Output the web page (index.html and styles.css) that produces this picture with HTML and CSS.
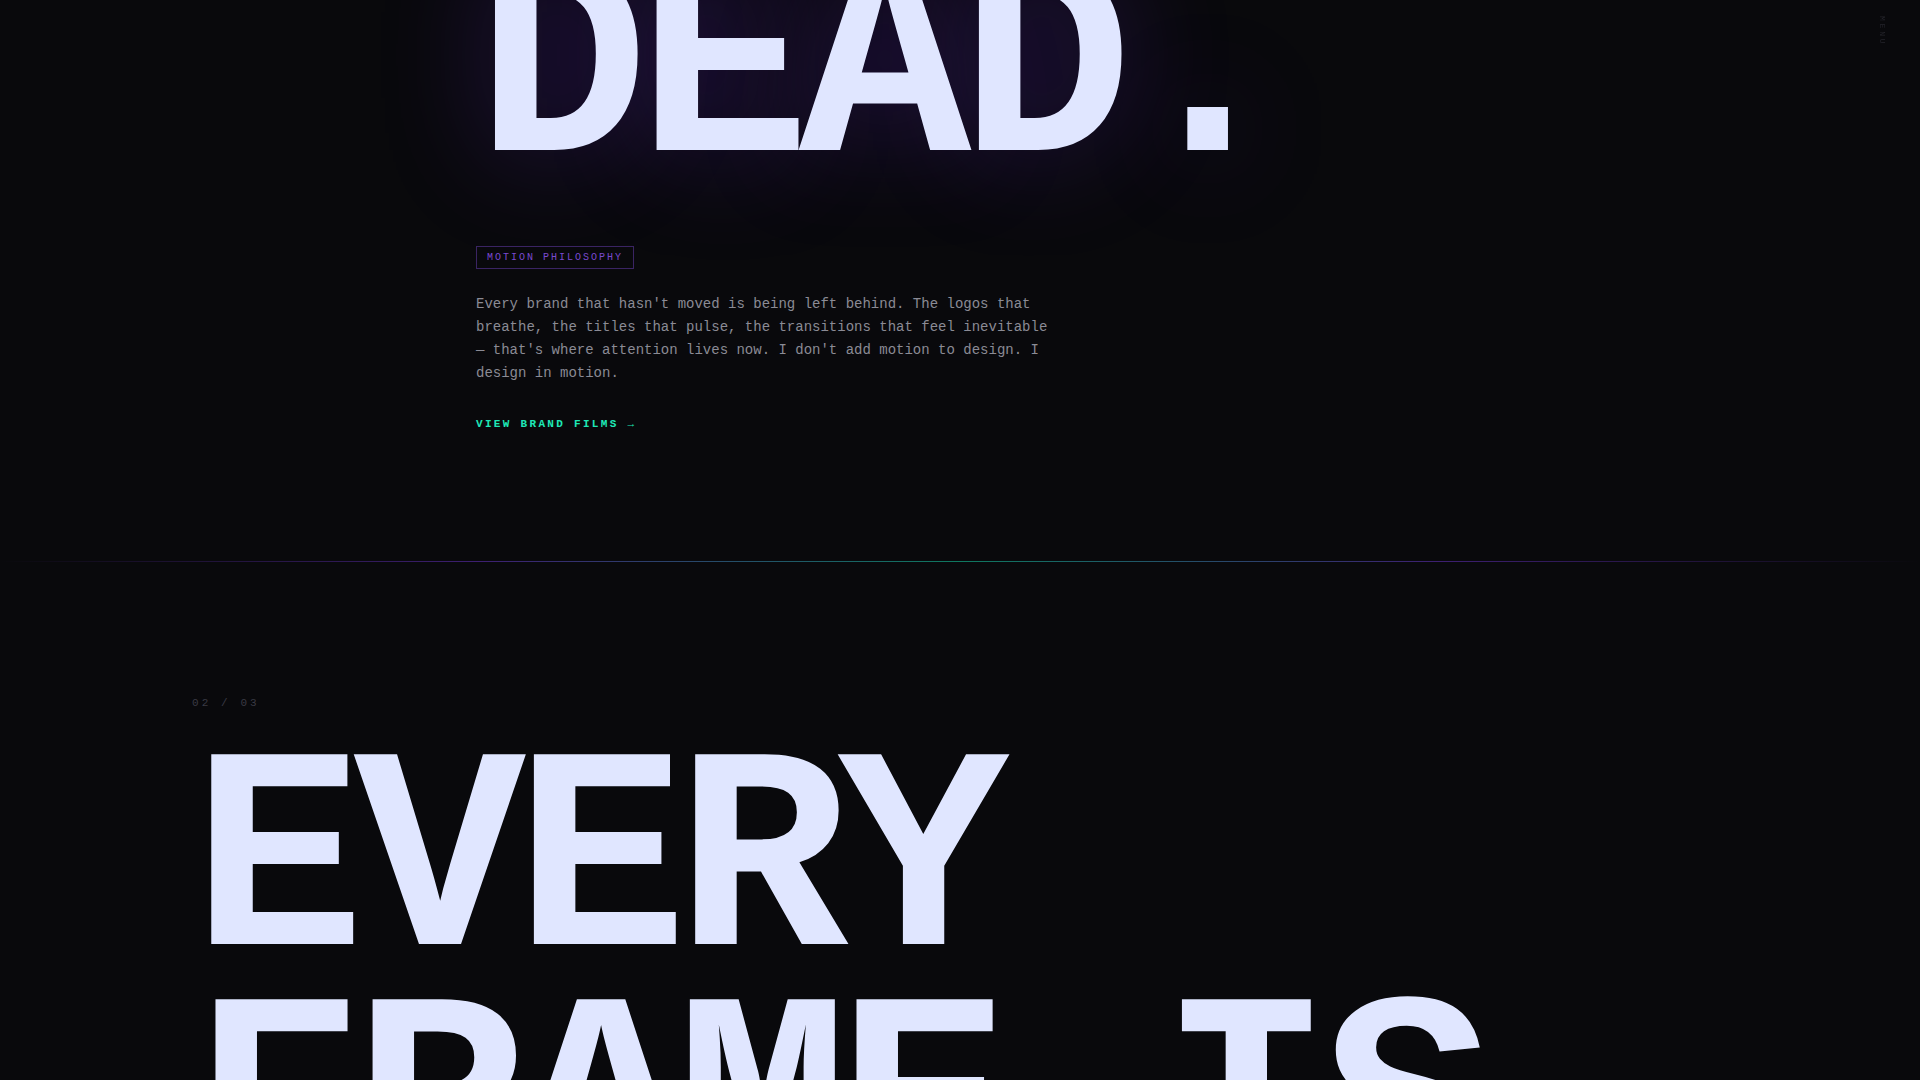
FILE: index.html
```html
<!DOCTYPE html>
<html lang="en">
<head>
<meta charset="utf-8">
<title>Motion Philosophy</title>
<link rel="stylesheet" href="styles.css">
</head>
<body>
<main class="page">
  <section class="chapter chapter-one">
    <div class="inner">
      <h1 class="mega glow">DEAD.</h1>
      <span class="tag">MOTION PHILOSOPHY</span>
      <p class="lede">Every brand that hasn't moved is being left behind. The logos that breathe, the titles that pulse, the transitions that feel inevitable — that's where attention lives now. I don't add motion to design. I design in motion.</p>
      <a class="cta" href="#">VIEW BRAND FILMS →</a>
    </div>
  </section>
  <div class="rule"></div>
  <section class="chapter chapter-two">
    <div class="count">02 / 03</div>
    <h2 class="mega">EVERY FRAME IS</h2>
  </section>
</main>
<div class="side">MENU</div>
</body>
</html>
```

FILE: styles.css
```css
html, body {
  margin: 0;
  padding: 0;
  background: #09090c;
}
body {
  font-family: "Liberation Mono", "Courier New", monospace;
  color: #8b8b95;
  height: 1080px;
  overflow: hidden;
}
.page {
  display: flex;
  flex-direction: column;
}
.chapter-one {
  padding-bottom: 131px;
}
.inner {
  width: 968px;
  margin: 0 auto;
  display: flex;
  flex-direction: column;
  align-items: flex-start;
}
.mega {
  font-family: "Liberation Mono", "Courier New", monospace;
  font-weight: 700;
  font-size: 288px;
  line-height: 0.85;
  letter-spacing: -0.04em;
  color: #e0e6ff;
  margin: 0;
}
.glow {
  margin-top: -49px;
  white-space: nowrap;
  text-shadow: 0 0 110px rgba(110, 50, 220, 0.3);
}
.tag {
  display: block;
  margin-top: 50px;
  font-size: 10px;
  line-height: normal;
  letter-spacing: 0.2em;
  padding: 5px 10px;
  color: #7a4ad0;
  border: 1px solid #3a2463;
}
.lede {
  margin: 24px 0 0;
  max-width: 580px;
  font-size: 14px;
  line-height: 1.65;
  color: #8b8b95;
}
.cta {
  display: block;
  margin-top: 33px;
  font-size: 11px;
  font-weight: 700;
  line-height: normal;
  letter-spacing: 0.21em;
  color: #1ee8b7;
  text-decoration: none;
}
.rule {
  height: 1px;
  background: linear-gradient(90deg, rgba(124, 58, 237, 0) 0%, rgba(124, 58, 237, 0.45) 25%, rgba(20, 230, 180, 0.5) 50%, rgba(124, 58, 237, 0.45) 75%, rgba(124, 58, 237, 0) 100%);
}
.chapter-two {
  padding: 135px 10% 0;
}
.count {
  font-size: 11px;
  line-height: normal;
  letter-spacing: 0.28em;
  color: #3a3a44;
}
.chapter-two .mega {
  margin-top: 36px;
}
.side {
  position: fixed;
  top: 16px;
  right: 33px;
  writing-mode: vertical-rl;
  font-size: 8px;
  letter-spacing: 0.35em;
  color: #24242b;
}
```
